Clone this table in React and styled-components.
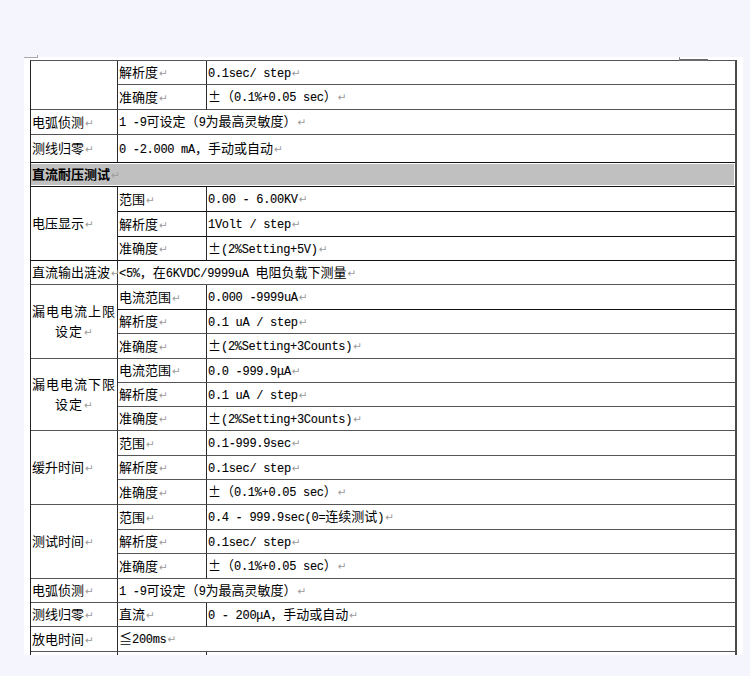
import React from 'react';
import styled, { createGlobalStyle, css } from 'styled-components';

const GlobalStyle = createGlobalStyle`
  html, body { margin: 0; padding: 0; background: #f5f6fd; }
  body { font-family: "Noto Sans CJK SC", "Noto Sans", sans-serif; }
`;

const Stage = styled.div`
  position: relative;
  width: 750px;
  height: 676px;
  padding: 57px 0 0 24px;
  box-sizing: border-box;
`;

const Page = styled.div`
  width: 719px;
  height: 598px;
  background: #fff;
  overflow: hidden;
  padding: 3px 7px 0 6px;
  box-sizing: border-box;
`;

const Grid = styled.div`
  display: grid;
  grid-template-columns: 87px 89px 528px;
  grid-template-rows: ${(p) => p.$rows.map((r) => r + 'px').join(' ')};
  width: 707px;
  box-sizing: border-box;
  border-top: 1px solid #555;
  border-left: 1px solid #222;
  border-right: 2px solid #4a4a4a;
`;

const Cell = styled.div`
  grid-column: ${(p) => p.$c} / span ${(p) => p.$cs || 1};
  grid-row: ${(p) => p.$r} / span ${(p) => p.$rs || 1};
  box-sizing: border-box;
  border-bottom: 1px solid ${(p) => p.$line || '#555'};
  border-right: ${(p) => (p.$last ? 'none' : '1px solid #2a2a2a')};
  display: flex;
  align-items: center;
  justify-content: ${(p) => (p.$center ? 'center' : 'flex-start')};
  text-align: ${(p) => (p.$center ? 'center' : 'left')};
  padding: 0 1px 0 1px;
  font-size: 13px;
  line-height: 20px;
  color: #000;
  white-space: ${(p) => (p.$wrap ? 'normal' : 'nowrap')};
  letter-spacing: ${(p) => (p.$spaced ? '1px' : '0')};
  min-width: 0;
  ${(p) =>
    p.$head &&
    css`
      background: #c0c0c0;
      font-weight: bold;
      box-shadow: inset 0 1px 0 #fff, inset 0 -1px 0 #fff, inset -1px 0 0 #fff;
    `}
`;

const Latin = styled.span`
  font-family: "Liberation Mono", "DejaVu Sans Mono", monospace;
  font-size: 12px;
  letter-spacing: -0.3px;
  font-weight: normal;
  -webkit-text-stroke: 0.1px #000;
`;

const Mark = styled.span`
  color: #9a9a9a;
  font-family: "DejaVu Sans", sans-serif;
  font-size: 10.5px;
  font-weight: normal;
  letter-spacing: 0;
  margin-left: 1px;
`;

const CornerTL = styled.div`
  position: absolute;
  left: 24px;
  top: 55px;
  width: 13px;
  height: 2px;
  border-right: 1px solid #a8a8a8;
  border-bottom: 1px solid #a8a8a8;
`;

const CornerTR = styled.div`
  position: absolute;
  left: 679px;
  top: 57px;
  width: 28px;
  height: 2px;
  border-left: 1px solid #8a8a8a;
  border-bottom: 2px solid #6a6a6a;
`;

const CJK = /[\u3000-\u9fff\uff00-\uffef\u2266\u00b1]/;

function Runs({ text }) {
  const parts = [];
  let cur = '';
  let curCjk = null;
  for (const ch of text) {
    const isCjk = CJK.test(ch);
    if (curCjk === null || isCjk === curCjk) {
      cur += ch;
    } else {
      parts.push([cur, curCjk]);
      cur = ch;
    }
    curCjk = isCjk;
  }
  if (cur) parts.push([cur, curCjk]);
  return parts.map(([t, cjk], i) =>
    cjk ? <React.Fragment key={i}>{t}</React.Fragment> : <Latin key={i}>{t}</Latin>
  );
}

const ROWS = [24, 25, 25, 28, 24, 25, 25, 24, 24, 25, 24, 25, 24, 24, 24, 25, 24, 25, 25, 24, 25, 24, 24, 25, 30];

const DARK = '#111';

const CELLS = [
  { r: 1, c: 1, rs: 2, t: null },
  { r: 1, c: 2, t: '解析度' },
  { r: 1, c: 3, t: '0.1sec/ step' },
  { r: 2, c: 2, t: '准确度' },
  { r: 2, c: 3, t: '±（0.1%+0.05 sec）' },
  { r: 3, c: 1, t: '电弧侦测' },
  { r: 3, c: 2, cs: 2, t: '1 -9可设定（9为最高灵敏度）' },
  { r: 4, c: 1, t: '测线归零', line: DARK },
  { r: 4, c: 2, cs: 2, t: '0 -2.000 mA，手动或自动', line: DARK },
  { r: 5, c: 1, cs: 3, t: '直流耐压测试', head: true, line: DARK },
  { r: 6, c: 1, rs: 3, t: '电压显示', line: DARK },
  { r: 6, c: 2, t: '范围', line: DARK },
  { r: 6, c: 3, t: '0.00 - 6.00KV', line: DARK },
  { r: 7, c: 2, t: '解析度', line: DARK },
  { r: 7, c: 3, t: '1Volt / step', line: DARK },
  { r: 8, c: 2, t: '准确度', line: DARK },
  { r: 8, c: 3, t: '±(2%Setting+5V)', line: DARK },
  { r: 9, c: 1, t: '直流输出涟波' },
  { r: 9, c: 2, cs: 2, t: '<5%，在6KVDC/9999uA 电阻负载下测量' },
  { r: 10, c: 1, rs: 3, lines: ['漏电电流上限', '设定'], center: true },
  { r: 10, c: 2, t: '电流范围', line: DARK },
  { r: 10, c: 3, t: '0.000 -9999uA', line: DARK },
  { r: 11, c: 2, t: '解析度' },
  { r: 11, c: 3, t: '0.1 uA / step' },
  { r: 12, c: 2, t: '准确度' },
  { r: 12, c: 3, t: '±(2%Setting+3Counts)' },
  { r: 13, c: 1, rs: 3, lines: ['漏电电流下限', '设定'], center: true },
  { r: 13, c: 2, t: '电流范围' },
  { r: 13, c: 3, t: '0.0 -999.9μA' },
  { r: 14, c: 2, t: '解析度' },
  { r: 14, c: 3, t: '0.1 uA / step' },
  { r: 15, c: 2, t: '准确度' },
  { r: 15, c: 3, t: '±(2%Setting+3Counts)' },
  { r: 16, c: 1, rs: 3, t: '缓升时间' },
  { r: 16, c: 2, t: '范围' },
  { r: 16, c: 3, t: '0.1-999.9sec' },
  { r: 17, c: 2, t: '解析度' },
  { r: 17, c: 3, t: '0.1sec/ step' },
  { r: 18, c: 2, t: '准确度' },
  { r: 18, c: 3, t: '±（0.1%+0.05 sec）' },
  { r: 19, c: 1, rs: 3, t: '测试时间' },
  { r: 19, c: 2, t: '范围' },
  { r: 19, c: 3, t: '0.4 - 999.9sec(0=连续测试)' },
  { r: 20, c: 2, t: '解析度' },
  { r: 20, c: 3, t: '0.1sec/ step' },
  { r: 21, c: 2, t: '准确度' },
  { r: 21, c: 3, t: '±（0.1%+0.05 sec）' },
  { r: 22, c: 1, t: '电弧侦测' },
  { r: 22, c: 2, cs: 2, t: '1 -9可设定（9为最高灵敏度）' },
  { r: 23, c: 1, t: '测线归零' },
  { r: 23, c: 2, t: '直流' },
  { r: 23, c: 3, t: '0 - 200μA，手动或自动' },
  { r: 24, c: 1, t: '放电时间' },
  { r: 24, c: 2, cs: 2, t: '≦200ms' },
  { r: 25, c: 1, t: null },
  { r: 25, c: 2, t: null },
  { r: 25, c: 3, t: null },
];

export default function App() {
  return (
    <>
      <GlobalStyle />
      <Stage>
        <Page>
          <Grid $rows={ROWS}>
            {CELLS.map((d, i) => {
              const cs = d.cs || 1;
              const last = d.c + cs - 1 === 3;
              return (
                <Cell
                  key={i}
                  $r={d.r}
                  $c={d.c}
                  $rs={d.rs}
                  $cs={cs}
                  $last={last}
                  $line={d.line}
                  $head={d.head}
                  $center={d.center}
                  $wrap={!!d.lines}
                  $spaced={!!d.lines}
                >
                  {d.lines ? (
                    <span>
                      {d.lines[0]}
                      <br />
                      {d.lines[1]}
                      <Mark>↵</Mark>
                    </span>
                  ) : d.t ? (
                    <span>
                      <Runs text={d.t} />
                      <Mark>↵</Mark>
                    </span>
                  ) : null}
                </Cell>
              );
            })}
          </Grid>
        </Page>
        <CornerTL />
        <CornerTR />
      </Stage>
    </>
  );
}
